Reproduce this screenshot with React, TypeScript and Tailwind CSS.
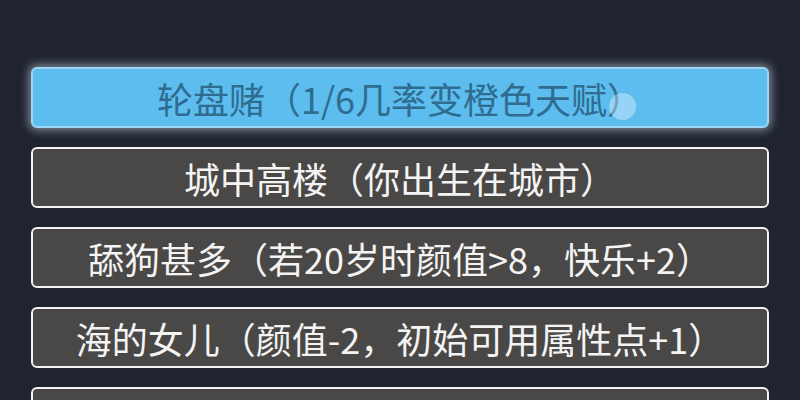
const talents = [
  { label: "轮盘赌（1/6几率变橙色天赋）", picked: true },
  { label: "城中高楼（你出生在城市）", picked: false },
  { label: "舔狗甚多（若20岁时颜值>8，快乐+2）", picked: false },
  { label: "海的女儿（颜值-2，初始可用属性点+1）", picked: false },
  { label: "天赋异禀（初始可用属性点+2）", picked: false },
];

function TalentButton({ label, picked }: { label: string; picked: boolean }) {
  return (
    <button
      className={
        picked
          ? "relative flex h-[61px] shrink-0 items-center justify-center rounded-[6px] border-2 border-[#9cd8f6] bg-[#5cbdee] text-[#2f6c90] shadow-[0_0_10px_2px_rgba(225,235,245,0.55)]"
          : "relative flex h-[61px] shrink-0 items-center justify-center rounded-[6px] border-2 border-[#f2f2f2] bg-[#4a4846] text-[#f4f4f4]"
      }
    >
      <span className="text-[36px] leading-none">{label}</span>
      {picked && (
        // touch point left by the tap
        <span className="absolute left-[576px] top-[24px] h-[27px] w-[27px] rounded-full bg-white/35" />
      )}
    </button>
  );
}

export default function App() {
  return (
    <div
      className="flex h-[400px] w-[800px] flex-col gap-[19px] overflow-hidden bg-[#1f2430] px-[31px] pt-[67px]"
      style={{ fontFamily: '"Noto Sans CJK SC", "Noto Sans", sans-serif' }}
    >
      {talents.map((t) => (
        <TalentButton key={t.label} label={t.label} picked={t.picked} />
      ))}
    </div>
  );
}
